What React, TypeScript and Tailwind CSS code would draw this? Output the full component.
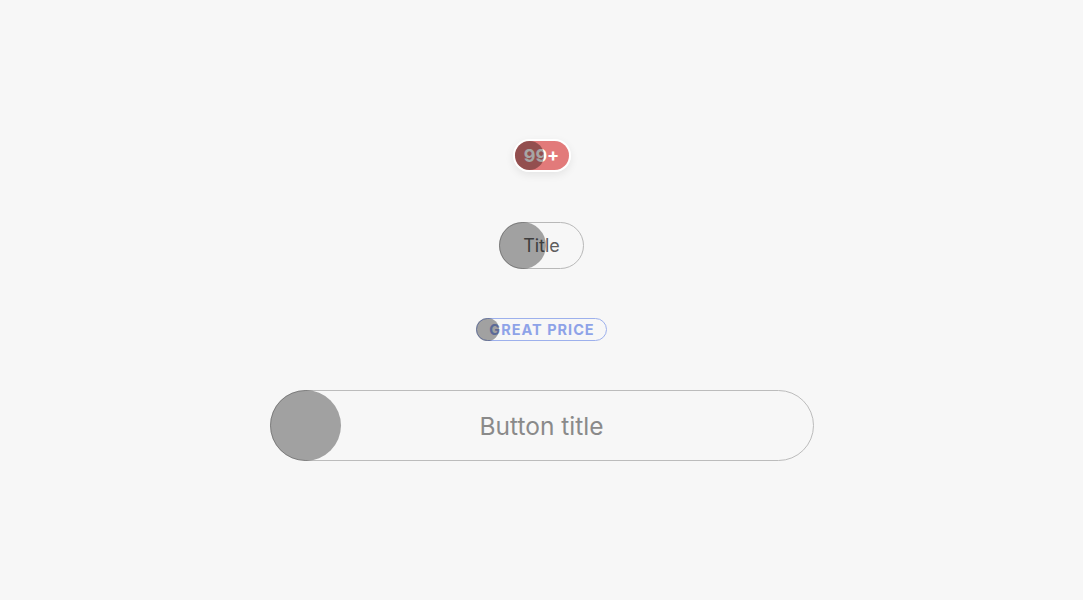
import React from "react";

export default function App() {
  return (
    <div
      className="flex min-h-screen w-full flex-col items-center bg-[#f7f7f7] pt-[139px]"
      style={{ fontFamily: "Inter, 'Noto Sans', sans-serif" }}
    >
      {/* Badge */}
      <div className="rounded-full border-2 border-white shadow-[0_3px_8px_rgba(0,0,0,0.08)]">
        <div className="relative flex h-[29px] w-[54px] items-center justify-center rounded-full bg-[#e27a7a] text-[18px] font-bold text-white">
          <span className="relative">99+</span>
          <span className="pointer-events-none absolute left-0 top-0 h-[29px] w-[29px] rounded-full bg-black/35" />
        </div>
      </div>

      {/* Title pill */}
      <div className="relative mt-[50px] flex h-[47px] w-[85px] items-center justify-center rounded-full border border-[#b8b8b8] text-[18px] text-[#5e5e5e]">
        <span>Title</span>
        <span className="pointer-events-none absolute -left-px -top-px h-[47px] w-[47px] rounded-full bg-black/35" />
      </div>

      {/* Great price */}
      <div className="relative mt-[49px] flex h-[23px] w-[131px] items-center justify-center rounded-full border border-[#9db0ec] text-[14.5px] font-bold tracking-[1px] text-[#8ea3e8]">
        <span className="pl-[1px]">GREAT PRICE</span>
        <span className="pointer-events-none absolute -left-px -top-px h-[23px] w-[23px] rounded-full bg-black/35" />
      </div>

      {/* Button */}
      <div className="relative mt-[49px] flex h-[71px] w-[544px] items-center justify-center rounded-full border border-[#bcbcbc] text-[24.5px] text-[#8a8a8a]">
        <span className="pt-[1px]">Button title</span>
        <span className="pointer-events-none absolute -left-px -top-px h-[71px] w-[71px] rounded-full bg-black/35" />
      </div>
    </div>
  );
}
